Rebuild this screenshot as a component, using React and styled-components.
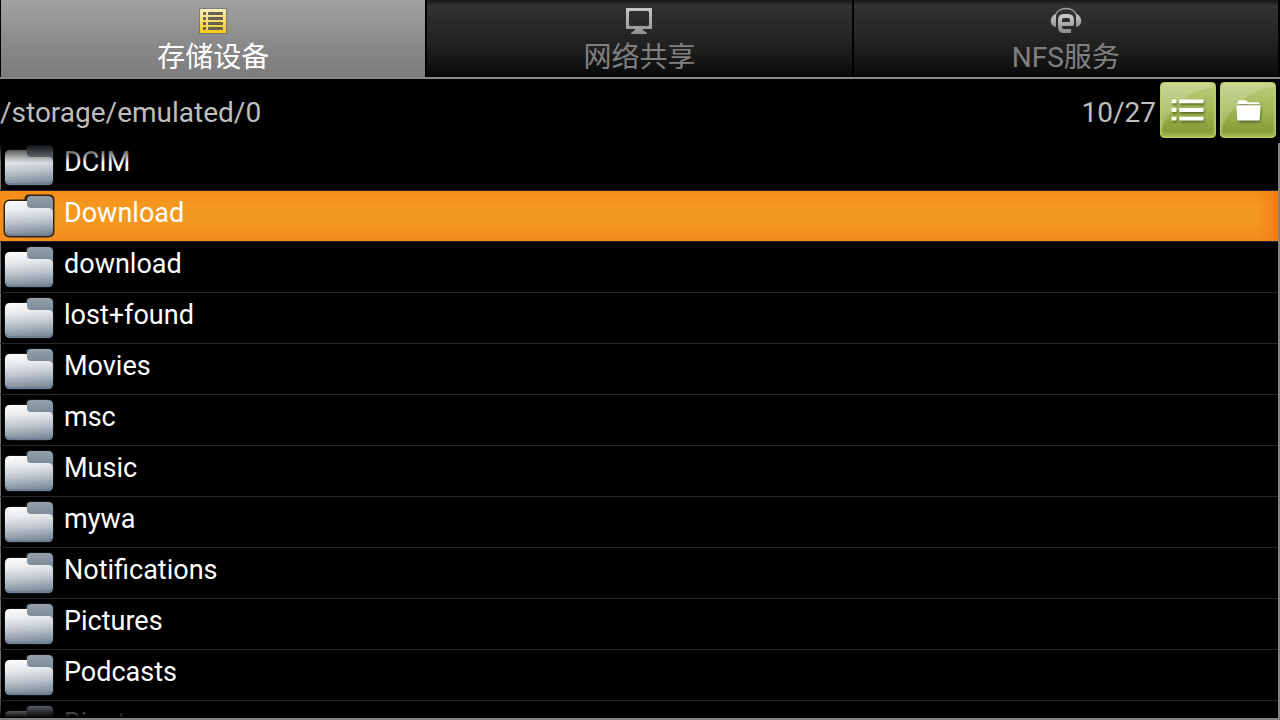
import { useLayoutEffect, useRef, useState } from "react";
import styled, { createGlobalStyle, css } from "styled-components";

const TABS = [
  { id: "storage", label: "存储设备", Icon: StorageIcon },
  { id: "network", label: "网络共享", Icon: MonitorIcon },
  { id: "nfs", label: "NFS服务", Icon: HeadsetIcon },
];

const FOLDERS = [
  "DCIM",
  "Download",
  "download",
  "lost+found",
  "Movies",
  "msc",
  "Music",
  "mywa",
  "Notifications",
  "Pictures",
  "Podcasts",
  "Ringtones",
];

export default function App() {
  const [tab, setTab] = useState("storage");
  const [selected, setSelected] = useState("Download");
  const listRef = useRef(null);

  // the first row is already partly under the top edge
  useLayoutEffect(() => {
    listRef.current.scrollTop = 3;
  }, []);

  return (
    <>
      <GlobalStyle />
      <Page>
        <TabBar role="tablist">
          {TABS.map(({ id, label, Icon }) => (
            <Tab key={id} role="tab" aria-selected={tab === id} $active={tab === id} onClick={() => setTab(id)}>
              <Icon />
              {label}
            </Tab>
          ))}
        </TabBar>
        <PathBar>
          <Path>/storage/emulated/0</Path>
          <Count>10/27</Count>
          <GreenButton aria-label="List view">
            <ListIcon />
          </GreenButton>
          <GreenButton aria-label="Folders">
            <SmallFolderIcon />
          </GreenButton>
        </PathBar>
        <ListFrame>
          <List ref={listRef}>
            {FOLDERS.map((name) => (
              <Item key={name}>
                <Row $selected={selected === name} onClick={() => setSelected(name)}>
                  <FolderIcon outlined={selected === name} />
                  <Name>{name}</Name>
                </Row>
              </Item>
            ))}
          </List>
        </ListFrame>
      </Page>
    </>
  );
}

function StorageIcon() {
  return (
    <TabIcon viewBox="0 0 32 32" aria-hidden="true">
      <defs>
        <linearGradient id="gold" x1="0" y1="0" x2="0" y2="1">
          <stop offset="0" stopColor="#f8efc0" />
          <stop offset="1" stopColor="#f8cc10" />
        </linearGradient>
      </defs>
      <path d="M2 4h28v26H2z" fill="#686868" opacity="0.6" />
      <path d="M3 5h26v24H3z" fill="url(#gold)" />
      <g fill="#706a50" stroke="#5e5b50" strokeWidth="1">
        <path d="M6.500 8.500h2v2h-2zM6.500 13.500h2v2h-2zM6.500 18.500h2v2h-2zM6.500 23.500h2v2h-2z" />
        <path d="M11.500 8.500h14v2h-14zM11.500 13.500h14v2h-14zM11.500 18.500h14v2h-14zM11.500 23.500h14v2h-14z" />
      </g>
    </TabIcon>
  );
}

function MonitorIcon() {
  return (
    <TabIcon viewBox="0 0 32 32" aria-hidden="true">
      <SilverGradient id="silver-monitor" />
      <path
        d="M3 4h26v21h-9v1l4 3v1H8v-1l4-3v-1H3zM6 8v13l1 1h18l1-1V8l-1-1H7z"
        fill="url(#silver-monitor)"
        fillRule="evenodd"
      />
    </TabIcon>
  );
}

function HeadsetIcon() {
  return (
    <TabIcon viewBox="0 0 32 32" aria-hidden="true">
      <SilverGradient id="silver-headset" />
      <path d="M5 12C8 2 24 2 27 12" fill="none" stroke="#a0a0a0" strokeWidth="1.500" />
      <path d="M6 10v13C-1 22-1 12 6 10zM26 10v13c7-1 7-11 0-13z" fill="url(#silver-headset)" />
      <path
        d="M10 20H22V16q0-4-4-4h-4q-4 0-4 4v7q0 4 4 4h7"
        fill="none"
        stroke="url(#silver-headset)"
        strokeWidth="4"
        strokeLinejoin="round"
      />
    </TabIcon>
  );
}

function SilverGradient({ id }) {
  return (
    <defs>
      <linearGradient id={id} x1="0" y1="0" x2="0" y2="1">
        <stop offset="0" stopColor="#c8c8c8" />
        <stop offset="1" stopColor="#909090" />
      </linearGradient>
    </defs>
  );
}

function ListIcon() {
  return (
    <ButtonIcon viewBox="0 0 56 56" aria-hidden="true">
      <path d="M11 17h5v4h-5zM19 17h25v4H19zM11 26h5v4h-5zM19 26h25v4H19zM11 35h5v4h-5zM19 35h25v4H19z" fill="#fff" />
    </ButtonIcon>
  );
}

function SmallFolderIcon() {
  return (
    <ButtonIcon viewBox="0 0 56 56" aria-hidden="true">
      <path d="M17 21v-1l2-2h7l2 2h11l1 1v1H17zM16 23h25v3l-1 13H17l-1-13z" fill="#fff" />
    </ButtonIcon>
  );
}

function FolderIcon({ outlined }) {
  return (
    <FolderSvg viewBox="0 0 56 50" aria-hidden="true">
      <defs>
        <linearGradient id="folder-front" x1="0" y1="0" x2="0.100" y2="1">
          <stop offset="0" stopColor="#fcfcfd" />
          <stop offset="0.300" stopColor="#e9ebed" />
          <stop offset="0.620" stopColor="#bfc6cd" />
          <stop offset="0.900" stopColor="#8e9ba8" />
          <stop offset="1" stopColor="#7d8c9a" />
        </linearGradient>
        <linearGradient id="folder-tab" x1="0" y1="0" x2="0" y2="1">
          <stop offset="0" stopColor="#95a0ac" />
          <stop offset="1" stopColor="#6c7b89" />
        </linearGradient>
      </defs>
      <path
        d="M9 10h16V8q0-3 3-3h20q4 0 4 4v31q0 5-5 5H9q-5 0-5-5V15q0-5 5-5z"
        fill="#2b2b2b"
        stroke={outlined ? "#2e2414" : "#222629"}
        strokeWidth={outlined ? 3 : 1}
      />
      <path d="M26 9q0-4 4-4h17q5 0 5 5v16H26z" fill="url(#folder-tab)" />
      <path
        d="M9 10h17v3q0 4 4 4h17q5 0 5 5v18q0 5-5 5H9q-5 0-5-5V15q0-5 5-5z"
        fill="url(#folder-front)"
      />
      <path d="M5 41q1 3 4 3h38q3 0 4-3" fill="none" stroke="#62748a" />
    </FolderSvg>
  );
}

const GlobalStyle = createGlobalStyle`
  * {
    box-sizing: border-box;
  }

  body {
    margin: 0;
    background: #000;
    font-family: Roboto, "Noto Sans CJK SC", sans-serif;
  }

  button {
    margin: 0;
    padding: 0;
    border: 0;
    font: inherit;
    cursor: pointer;
  }
`;

const Page = styled.div`
  display: flex;
  flex-direction: column;
  height: 100vh;
  overflow: hidden;
`;

const TabBar = styled.div`
  display: flex;
  gap: 2px;
  padding: 0 2px 0 1px;
  border-bottom: 2px solid #8c898c;
`;

const Tab = styled.button`
  flex: 1;
  display: flex;
  flex-direction: column;
  align-items: center;
  gap: 4px;
  height: 77px;
  padding-top: 4px;
  color: #808080;
  background: linear-gradient(#181818, #323232 8%, #222 55%, #1b1b1b 70%, #080808);
  font-size: 28px;
  line-height: 36px;

  ${({ $active }) =>
    $active &&
    css`
      color: #fff;
      background: linear-gradient(#a2a2a2, #8a8a8a 55%, #7c7c7c);
    `}
`;

const TabIcon = styled.svg`
  width: 32px;
  height: 32px;
  flex-shrink: 0;
`;

const PathBar = styled.div`
  display: flex;
  align-items: center;
  gap: 4px;
  padding: 3px 4px 5px 0;
  color: #bebebe;
  font-size: 28px;
  line-height: 50px;
`;

const Count = styled.span`
  padding-top: 6px;
`;

const Path = styled(Count)`
  flex: 1;
`;

const GreenButton = styled.button`
  width: 56px;
  height: 56px;
  border: 1px solid #b5cc64;
  border-radius: 4px;
  background: radial-gradient(circle at 60px 66px, #fff0 62px, #ffffff2c 63px),
    linear-gradient(#bdcd7c, #a2b856 50%, #869c35 88%, #9bb44b);
  box-shadow: inset 0 0 3px #cbe078;
`;

const ButtonIcon = styled.svg`
  display: block;
  width: 100%;
  height: 100%;
  filter: drop-shadow(1px 2px 1px #5f7028);
`;

const ListFrame = styled.div`
  position: relative;
  flex: 1;
  min-height: 0;
  border-right: 2px solid #838383;
  border-bottom: 2px solid #838383;

  /* fading edges over the scrolled rows */
  &::before,
  &::after {
    content: "";
    position: absolute;
    left: 0;
    right: 0;
    height: 20px;
    pointer-events: none;
  }

  &::before {
    top: 0;
    background: linear-gradient(#000, #0000);
  }

  &::after {
    bottom: 0;
    background: linear-gradient(#0000, #000);
  }
`;

const List = styled.ul`
  height: 100%;
  margin: 0;
  padding: 0;
  overflow-y: auto;
  list-style: none;
  scrollbar-width: none;
`;

const Item = styled.li`
  border-bottom: 1px solid #262829;
`;

const Row = styled.button`
  display: flex;
  align-items: flex-start;
  gap: 7px;
  width: 100%;
  height: 50px;
  border-left: 1px solid #707070;
  color: #fff;
  background: #000;
  font-size: 27px;
  line-height: 44px;
  text-align: left;

  ${({ $selected }) =>
    $selected &&
    css`
      border-left-color: #f58a1c;
      background: linear-gradient(to left, #f07c14, #f59a2000 20px),
        linear-gradient(to right, #f58a1c, #f59a2000 10px),
        linear-gradient(#f58c18, #f59820 30%, #f59820 65%, #f48a1c);
    `}
`;

const FolderSvg = styled.svg`
  width: 56px;
  height: 50px;
  flex-shrink: 0;
`;

const Name = styled.span``;
